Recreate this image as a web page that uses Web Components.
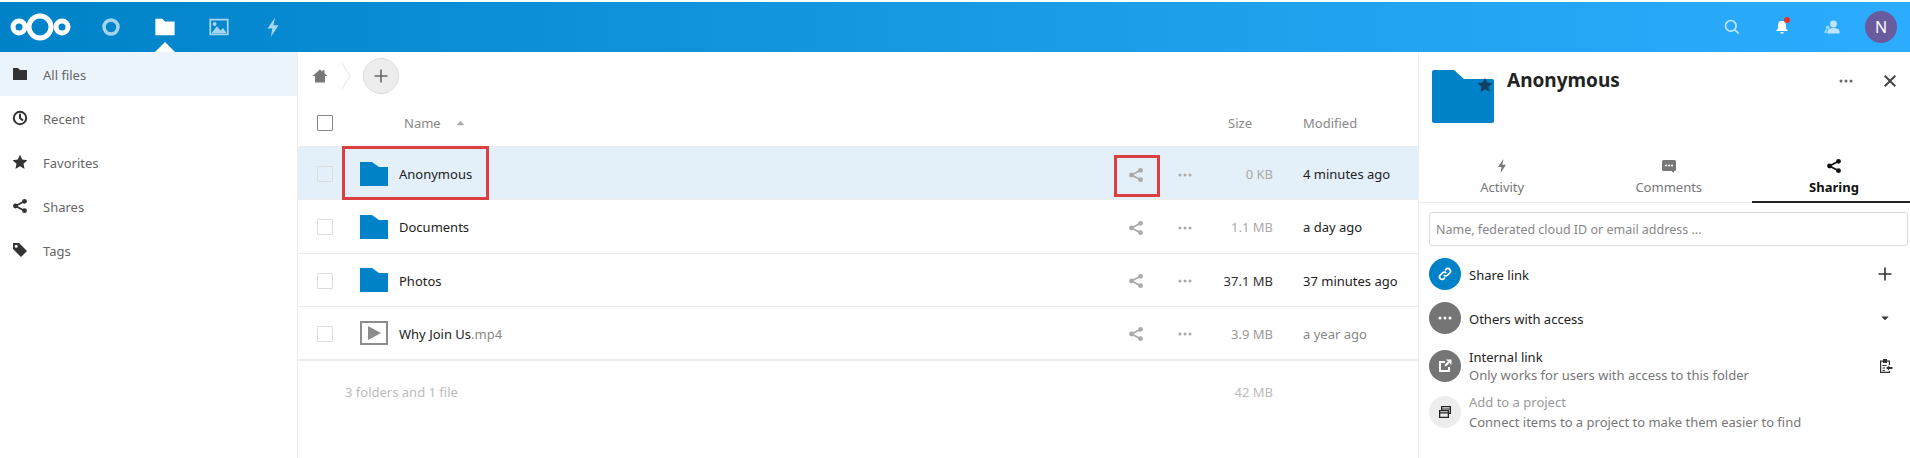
<!DOCTYPE html>
<html>
<head>
<meta charset="utf-8">
<title>Files</title>
<style>
html, body { margin: 0; padding: 0; background: #fff; height: 458px; overflow: hidden; }
body { font-family: "Noto Sans", "Open Sans", sans-serif; font-size: 13px; color: #222; }
nc-app { height: 458px; }
</style>
</head>
<body>
<nc-app>
  <nc-header slot="header"></nc-header>
  <nc-sidebar slot="left">
    <nc-nav-item icon="folder" active>All files</nc-nav-item>
    <nc-nav-item icon="clock">Recent</nc-nav-item>
    <nc-nav-item icon="star">Favorites</nc-nav-item>
    <nc-nav-item icon="share">Shares</nc-nav-item>
    <nc-nav-item icon="tag">Tags</nc-nav-item>
  </nc-sidebar>
  <nc-files slot="main">
    <nc-file-row kind="folder" size="0 KB" size-color="#aaa" modified="4 minutes ago" mark hover>Anonymous</nc-file-row>
    <nc-file-row kind="folder" size="1.1 MB" size-color="#aaa" modified="a day ago">Documents</nc-file-row>
    <nc-file-row kind="folder" size="37.1 MB" size-color="#333" modified="37 minutes ago">Photos</nc-file-row>
    <nc-file-row kind="video" size="3.9 MB" size-color="#999" modified="a year ago" mod-color="#888" ext=".mp4">Why Join Us</nc-file-row>
  </nc-files>
  <nc-details slot="right">
    <nc-share-row circle="#0082c9" icon="link" glyph="#fff" action="plus">Share link</nc-share-row>
    <nc-share-row circle="#757575" icon="dots" glyph="#fff" action="caret" style="margin-top:1px">Others with access</nc-share-row>
    <nc-share-row circle="#757575" icon="external" glyph="#fff" action="clipboard" sub="Only works for users with access to this folder" style="margin-top:5px">Internal link</nc-share-row>
    <nc-share-row circle="#ededed" icon="projects" glyph="#222" sub="Connect items to a project to make them easier to find" dim>Add to a project</nc-share-row>
  </nc-details>
</nc-app>

<script>
const ICONS = {
  folder: '<path d="M1 2h5l2 2h7v10H1z"/>',
  clock: '<path fill-rule="evenodd" d="M8 .8a7.2 7.2 0 1 0 0 14.4A7.2 7.2 0 0 0 8 .8zm0 2a5.2 5.2 0 1 1 0 10.4A5.2 5.2 0 0 1 8 2.800z"/><path d="M7 3.800h2v3.800l2.700 2.200-1.300 1.500L7 8.500z"/>',
  star: '<path d="M8 .8l2.200 4.800 5.200.6-3.900 3.500 1.100 5.200L8 12.300l-4.600 2.600 1.100-5.200L.6 6.200l5.200-.6z"/>',
  share: '<circle cx="12.500" cy="3.300" r="2.400"/><circle cx="3.500" cy="8" r="2.400"/><circle cx="12.500" cy="12.700" r="2.400"/><path d="M12.500 3.300 3.500 8l9 4.700" fill="none" stroke="currentColor" stroke-width="1.800"/>',
  tag: '<path fill-rule="evenodd" d="M1 1h6l8 8-6 6-8-8zm3.200 1.700a1.500 1.500 0 1 0 0 3 1.500 1.500 0 0 0 0-3z"/>',
  home: '<path d="M8 1.500l2.500 2.200V2.300h2v3.200L15.500 8H13v6.500H3V8H.500z"/>',
  plus: '<path d="M7.200 1.500h1.600v5.700h5.700v1.600H8.800v5.700H7.200V8.800H1.500V7.200h5.700z"/>',
  dots: '<circle cx="3" cy="8" r="1.500"/><circle cx="8" cy="8" r="1.500"/><circle cx="13" cy="8" r="1.500"/>',
  close: '<path d="M3.400 2 8 6.600 12.600 2 14 3.400 9.400 8l4.600 4.600-1.400 1.400L8 9.400 3.400 14 2 12.600 6.600 8 2 3.400z"/>',
  caret: '<path d="M3 6h10l-5 5z"/>',
  bolt: '<path d="M9.500 1 4 9h3.500l-1 6L12 6.700H8.300z"/>',
  comment: '<path fill-rule="evenodd" d="M2.500 2h11A1.500 1.500 0 0 1 15 3.500v8a1.500 1.500 0 0 1-1.500 1.500H13v2l-2.500-2h-8A1.500 1.500 0 0 1 1 11.500v-8A1.500 1.500 0 0 1 2.500 2zM5 6.500a1 1 0 1 0 0 2 1 1 0 0 0 0-2zm3 0a1 1 0 1 0 0 2 1 1 0 0 0 0-2zm3 0a1 1 0 1 0 0 2 1 1 0 0 0 0-2z"/>',
  link: '<path d="M6.800 9.200a2.600 2.600 0 0 0 3.700 0l2.200-2.200a2.600 2.600 0 0 0-3.700-3.700L8 4.300M9.200 6.800a2.600 2.600 0 0 0-3.700 0L3.300 9a2.600 2.600 0 0 0 3.700 3.700L8 11.700" fill="none" stroke="currentColor" stroke-width="1.700"/>',
  external: '<path d="M2 3h6v2H4v7h7V9h2v5H2z"/><path d="M9 1.500h5.500V7l-2-2-3.600 3.600-1.500-1.500L11 3.500z"/>',
  projects: '<path fill-rule="evenodd" d="M4 2h10v8h-2v4H2V6h2zm1.300 1.200V4.400h7.400V3.200zm0 2.300V6H12v2.800h.7V5.500zM3.300 7.300v1h7.400v-1zm0 2.200v3.300h7.400V9.500z"/>',
  clipboard: '<path fill-rule="evenodd" d="M6 1h4v1.500h3V7h-1.200V3.700H10V5H6V3.700H4.200v10.100h7.600V13H13v2H3V2.500h3z"/><path d="M5.500 7h4v1h-4zM5.500 9.500h2.500v1H5.500zM5.500 12h2.500v1H5.500zM15.500 9h-3.300V7.500L9 10l3.200 2.500V11h3.300z"/>',
  search: '<path d="M6.800 1.500a5.300 5.300 0 1 0 0 10.600 5.300 5.300 0 0 0 0-10.600zM10.700 10.700l4 4" fill="none" stroke="currentColor" stroke-width="1.700"/>',
  bell: '<path d="M8 2a4 4 0 0 0-4 4v3.500L2 12h12l-2-2.500V6a4 4 0 0 0-4-4zM6.300 13h3.400a1.700 1.700 0 0 1-3.400 0z"/>',
  contacts: '<circle cx="9.500" cy="5" r="3.400"/><path d="M3.500 14.500v-2c0-2 2-3.500 6-3.500s6 1.500 6 3.500v2z"/><circle cx="3.800" cy="8.500" r="2" opacity=".7"/><path d="M.5 14v-1.500c0-1.300.9-2 2.500-2.300v3.800z" opacity=".7"/>',
  image: '<path fill-rule="evenodd" d="M1 2h14v12H1zm1.300 1.300v9.400h11.400V3.300z" /><path d="M2.500 12.500 6.500 7.500l2.500 3 2-1.700 2.500 3.700zM4.800 4.400a1.400 1.400 0 1 1 0 2.800 1.400 1.400 0 0 1 0-2.800z"/>'
};

class NcIcon extends HTMLElement {
  connectedCallback() {
    const size = this.getAttribute('size') || 16;
    const root = this.shadowRoot || this.attachShadow({ mode: 'open' });
    root.innerHTML = `<style>:host{display:inline-flex;line-height:0;flex:none}</style>
      <svg width="${size}" height="${size}" viewBox="0 0 16 16" fill="currentColor">${ICONS[this.getAttribute('name')] || ''}</svg>`;
  }
}

class NcApp extends HTMLElement {
  constructor() {
    super();
    this.attachShadow({ mode: 'open' }).innerHTML = `
      <style>
        :host { display: grid; grid-template-columns: 298px 1120px 492px; grid-template-rows: 52px 406px; }
        ::slotted([slot=header]) { grid-column: 1 / 4; }
      </style>
      <slot name="header"></slot>
      <slot name="left"></slot>
      <slot name="main"></slot>
      <slot name="right"></slot>`;
  }
}

class NcHeader extends HTMLElement {
  constructor() {
    super();
    this.attachShadow({ mode: 'open' }).innerHTML = `
      <style>
        :host { display: flex; box-sizing: border-box; height: 52px; padding-top: 2px; background: #fff; }
        .bar { flex: 1; position: relative; display: flex; align-items: center; color: #fff;
               background: linear-gradient(90deg, #0082c9 0%, #1c9fe8 60%, #2cacff 100%); }
        .logo { margin-left: 9px; width: 64px; line-height: 0; }
        .apps { display: flex; margin-left: 11px; }
        .app { width: 54px; height: 50px; display: flex; align-items: center; justify-content: center; opacity: .65; position: relative; }
        .app.on { opacity: 1; }
        .app.on::after { content: ''; position: absolute; left: 50%; bottom: 0; margin-left: -10px;
               border: 10px solid transparent; border-top: 0; border-bottom-color: #fff; }
        .tools { margin-left: auto; display: flex; align-items: center; }
        .tool { width: 50px; display: flex; justify-content: center; position: relative; opacity: .7; }
        .tool.bell { opacity: 1; }
        .dot { position: absolute; width: 6px; height: 6px; background: #e9322d; border-radius: 50%; top: -2px; left: 27px; }
        .avatar { width: 32px; height: 32px; border-radius: 50%; background: #6a5a9e; color: #fff; margin: 0 13px 0 8px;
                  display: flex; align-items: center; justify-content: center; font-size: 16px; }
      </style>
      <div class="bar">
        <div class="logo">
          <svg width="64" height="30" viewBox="0 0 64 30" fill="none" stroke="#fff">
            <circle cx="31" cy="15" r="11" stroke-width="5"/>
            <circle cx="10" cy="15" r="6" stroke-width="5"/>
            <circle cx="53" cy="15" r="6" stroke-width="5"/>
          </svg>
        </div>
        <div class="apps">
          <div class="app"><svg width="20" height="20" viewBox="0 0 20 20" fill="none" stroke="#fff" stroke-width="3.500"><circle cx="10" cy="10" r="7"/></svg></div>
          <div class="app on"><nc-icon name="folder" size="22"></nc-icon></div>
          <div class="app"><nc-icon name="image" size="22"></nc-icon></div>
          <div class="app"><nc-icon name="bolt" size="22"></nc-icon></div>
        </div>
        <div class="tools">
          <div class="tool"><nc-icon name="search" size="16"></nc-icon></div>
          <div class="tool bell"><nc-icon name="bell" size="16"></nc-icon><span class="dot"></span></div>
          <div class="tool"><nc-icon name="contacts" size="16"></nc-icon></div>
          <div class="avatar">N</div>
        </div>
      </div>`;
  }
}

class NcSidebar extends HTMLElement {
  constructor() {
    super();
    this.attachShadow({ mode: 'open' }).innerHTML = `
      <style>:host { display: block; border-right: 1px solid #ededed; background: #fff; }</style>
      <slot></slot>`;
  }
}

class NcNavItem extends HTMLElement {
  connectedCallback() {
    const root = this.shadowRoot || this.attachShadow({ mode: 'open' });
    root.innerHTML = `
      <style>
        :host { display: flex; align-items: center; height: 44px; padding-left: 12px; color: #666; }
        :host([active]) { background: #ecf4fb; }
        nc-icon { color: #333; margin-right: 15px; }
        .t { padding-top: 2px; }
      </style>
      <nc-icon name="${this.getAttribute('icon')}" size="16"></nc-icon><span class="t"><slot></slot></span>`;
  }
}

class NcFiles extends HTMLElement {
  constructor() {
    super();
    this.attachShadow({ mode: 'open' }).innerHTML = `
      <style>
        :host { display: block; }
        .crumbs { height: 48px; display: flex; align-items: center; padding-left: 14px; color: #777; }
        .sep { margin: 0 12px 0 13px; line-height: 0; }
        .add { width: 36px; height: 36px; border-radius: 50%; background: #ededed; border: 1px solid #dbdbdb;
               box-sizing: border-box; display: flex; align-items: center; justify-content: center; color: #666; }
        .head { height: 47px; display: flex; align-items: center; color: #888; border-bottom: 1px solid #ededed; box-sizing: border-box; }
        .box { width: 16px; height: 16px; border: 1px solid #888; border-radius: 1px; box-sizing: border-box; margin-left: 19px; }
        .name { margin-left: 71px; }
        .sort { margin-left: 13px; color: #aaa; line-height: 0; }
        .size { margin-left: auto; margin-right: 21px; }
        .mod { width: 115px; margin-left: 30px; }
        .sum { display: flex; height: 62px; align-items: center; color: #bbb; border-top: 1px solid #ededed; box-sizing: border-box; }
        .sum .n { margin-left: 47px; }
        .sum .s { margin-left: auto; width: 64px; text-align: right; }
        .sum .e { width: 115px; margin-left: 30px; }
      </style>
      <div class="crumbs">
        <nc-icon name="home" size="16"></nc-icon>
        <span class="sep"><svg width="10" height="28" viewBox="0 0 10 28" fill="none" stroke="#e4e4e4"><path d="M1 1l8 13-8 13"/></svg></span>
        <span class="add"><nc-icon name="plus" size="16"></nc-icon></span>
      </div>
      <div class="head">
        <span class="box"></span><span class="name">Name</span>
        <span class="sort"><nc-icon name="caret" size="13" style="transform:scaleY(-1)"></nc-icon></span>
        <span class="size">Size</span><span class="mod">Modified</span>
      </div>
      <slot></slot>
      <div class="sum"><span class="n">3 folders and 1 file</span><span class="s">42 MB</span><span class="e"></span></div>`;
  }
}

class NcFileRow extends HTMLElement {
  connectedCallback() {
    const root = this.shadowRoot || this.attachShadow({ mode: 'open' });
    const folder = '<svg width="28" height="24" viewBox="0 0 28 24" fill="#0082c9"><path d="M0 0h12l7 5h9v19H0z"/></svg>';
    const video = '<svg width="28" height="24" viewBox="0 0 28 24"><rect x="1" y="1" width="26" height="22" fill="#fff" stroke="#8c8c8c" stroke-width="2"/><path d="M8 5l13 7-13 7z" fill="#8c8c8c"/></svg>';
    const ext = this.getAttribute('ext');
    root.innerHTML = `
      <style>
        :host { display: flex; align-items: center; height: 53.25px; box-sizing: border-box; border-bottom: 1px solid #ededed; position: relative; color: #222; }
        :host([hover]) { background: #e3f0f9; }
        .box { width: 16px; height: 16px; border: 1px solid #dcdcdc; border-radius: 1px; box-sizing: border-box; margin: 2px 0 0 19px; }
        .thumb { margin: 1px 0 0 27px; line-height: 0; }
        .label { margin-left: 11px; padding-top: 2px; }
        .ext { color: #888; }
        .acts { margin-left: auto; margin-right: 16px; padding-top: 3px; display: flex; align-items: center; color: #aaa; }
        .acts nc-icon:first-child { margin-right: 33px; }
        .size { width: 64px; text-align: right; padding-top: 2px; color: ${this.getAttribute('size-color') || '#888'}; }
        .mod { width: 115px; margin-left: 30px; padding-top: 2px; color: ${this.getAttribute('mod-color') || '#222'}; white-space: nowrap; }
        .mark { position: absolute; border: 3px solid #d9403f; box-sizing: border-box; pointer-events: none; }
        .m1 { left: 44px; top: -1px; width: 147px; height: 54px; }
        .m2 { left: 816px; top: 8px; width: 46px; height: 42px; }
      </style>
      <span class="box"></span>
      <span class="thumb">${this.getAttribute('kind') === 'video' ? video : folder}</span>
      <span class="label"><slot></slot>${ext ? `<span class="ext">${ext}</span>` : ''}</span>
      <span class="acts"><nc-icon name="share" size="16"></nc-icon><nc-icon name="dots" size="16"></nc-icon></span>
      <span class="size">${this.getAttribute('size')}</span>
      <span class="mod">${this.getAttribute('modified')}</span>
      ${this.hasAttribute('mark') ? '<span class="mark m1"></span><span class="mark m2"></span>' : ''}`;
  }
}

class NcDetails extends HTMLElement {
  constructor() {
    super();
    this.attachShadow({ mode: 'open' }).innerHTML = `
      <style>
        :host { display: block; border-left: 1px solid #ededed; box-sizing: border-box; }
        .top { display: flex; height: 97px; padding: 17px 0 0 13px; box-sizing: border-box; }
        .big { line-height: 0; position: relative; height: 54px; }
        .star { position: absolute; left: 45px; top: 8px; color: #123f5f; }
        h1 { margin: -1px 0 0 13px; font-size: 19px; line-height: 24px; font-weight: 700; color: #222; }
        .actions { margin-left: auto; display: flex; height: 24px; align-items: center; color: #444; }
        .actions .more { margin-right: 28px; color: #666; }
        .actions .x { margin-right: 12px; }
        .tabs { display: flex; height: 54px; border-bottom: 1px solid #ededed; box-sizing: border-box; }
        .tab { width: 166.5px; display: flex; flex-direction: column; align-items: center; padding-top: 9px; box-sizing: border-box; color: #777; line-height: 20px; }
        .tab nc-icon { height: 16px; margin-bottom: 3px; }
        .tab.on { flex: 1; width: auto; padding-left: 6px; color: #111; font-weight: 700; border-bottom: 2px solid #222; margin-bottom: -1px; }
        .body { padding: 9px 2px 0 10px; }
        .input { height: 34px; border: 1px solid #dbdbdb; border-radius: 3px; box-sizing: border-box; display: flex; align-items: center;
                 padding-left: 6px; color: #888; font-size: 12.500px; margin-bottom: 6px; }
      </style>
      <div class="top">
        <div class="big">
          <svg width="62" height="54" viewBox="0 0 62 54" fill="#0082c9"><path d="M2 1h20l10 9h28a2 2 0 0 1 2 2v40a2 2 0 0 1-2 2H2a2 2 0 0 1-2-2V3a2 2 0 0 1 2-2z"/></svg>
          <nc-icon class="star" name="star" size="16"></nc-icon>
        </div>
        <h1>Anonymous</h1>
        <div class="actions"><nc-icon class="more" name="dots" size="16"></nc-icon><nc-icon class="x" name="close" size="16"></nc-icon></div>
      </div>
      <div class="tabs">
        <div class="tab"><nc-icon name="bolt" size="16"></nc-icon>Activity</div>
        <div class="tab"><nc-icon name="comment" size="16"></nc-icon>Comments</div>
        <div class="tab on"><nc-icon name="share" size="16"></nc-icon>Sharing</div>
      </div>
      <div class="body">
        <div class="input">Name, federated cloud ID or email address ...</div>
        <slot></slot>
      </div>`;
  }
}

class NcShareRow extends HTMLElement {
  connectedCallback() {
    const root = this.shadowRoot || this.attachShadow({ mode: 'open' });
    const sub = this.getAttribute('sub');
    const action = this.getAttribute('action');
    const acSize = action === 'caret' ? 12 : 16;
    root.innerHTML = `
      <style>
        :host { display: flex; align-items: center; min-height: 43px; margin-bottom: ${sub ? 3 : 0}px; color: #222; }
        :host([dim]) .title { color: #999; }
        .circle { width: 32px; height: 32px; border-radius: 50%; flex: none; display: flex; align-items: center; justify-content: center;
                  background: ${this.getAttribute('circle')}; color: ${this.getAttribute('glyph')}; margin-right: 8px; }
        .text { flex: 1; line-height: 18px; padding-top: ${sub ? 0 : 2}px; }
        .sub { color: #777; }
        :host([dim]) .text { line-height: 20px; }
        .act { width: 16px; margin-right: 15px; color: #333; line-height: 0; display: flex; justify-content: center; }
      </style>
      <span class="circle"><nc-icon name="${this.getAttribute('icon')}" size="16"></nc-icon></span>
      <span class="text"><span class="title"><slot></slot></span>${sub ? `<div class="sub">${sub}</div>` : ''}</span>
      ${action ? `<span class="act"><nc-icon name="${action}" size="${acSize}"></nc-icon></span>` : ''}`;
  }
}

customElements.define('nc-icon', NcIcon);
customElements.define('nc-app', NcApp);
customElements.define('nc-header', NcHeader);
customElements.define('nc-sidebar', NcSidebar);
customElements.define('nc-nav-item', NcNavItem);
customElements.define('nc-files', NcFiles);
customElements.define('nc-file-row', NcFileRow);
customElements.define('nc-details', NcDetails);
customElements.define('nc-share-row', NcShareRow);
</script>
</body>
</html>
